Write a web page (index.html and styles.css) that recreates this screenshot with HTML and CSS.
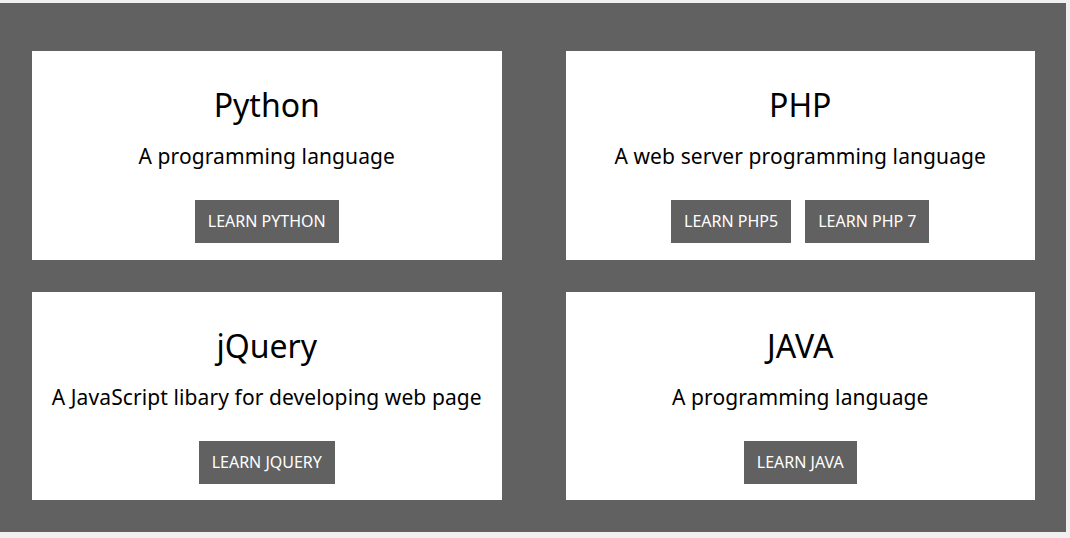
FILE: index.html
```html
<!DOCTYPE html>
<html>
<head>
<meta charset="utf-8">
<link rel="stylesheet" href="styles.css">
</head>
<body>
<div class="page">
  <div class="grid">
    <div class="card">
      <h2 class="title">Python</h2>
      <p class="desc">A programming language</p>
      <div class="actions"><a class="btn">LEARN PYTHON</a></div>
    </div>
    <div class="card">
      <h2 class="title">PHP</h2>
      <p class="desc">A web server programming language</p>
      <div class="actions"><a class="btn">LEARN PHP5</a><a class="btn">LEARN PHP 7</a></div>
    </div>
    <div class="card">
      <h2 class="title">jQuery</h2>
      <p class="desc">A JavaScript libary for developing web page</p>
      <div class="actions"><a class="btn">LEARN JQUERY</a></div>
    </div>
    <div class="card">
      <h2 class="title">JAVA</h2>
      <p class="desc">A programming language</p>
      <div class="actions"><a class="btn">LEARN JAVA</a></div>
    </div>
  </div>
</div>
</body>
</html>
```
FILE: styles.css
```css
html, body {
  margin: 0;
  padding: 0;
}
body {
  background: #f0f0f0;
  padding-top: 3px;
  font-family: "Noto Sans", "Open Sans", sans-serif;
  color: #000;
}
.page {
  width: 1066px;
  height: 529px;
  box-sizing: border-box;
  background: #616161;
  padding: 48px 31px 32px 32px;
}
.grid {
  display: grid;
  grid-template-columns: 1fr 1fr;
  column-gap: 64px;
  row-gap: 32px;
}
.card {
  background: #fff;
  text-align: center;
  padding: 34px 4px 17px;
  height: 209px;
  box-sizing: border-box;
}
.card:nth-child(n+3) {
  height: 208px;
}
.title {
  margin: 0;
  font-size: 32px;
  line-height: 40px;
  font-weight: normal;
}
.desc {
  margin: 17px 0 0;
  font-size: 21px;
  line-height: 28px;
  letter-spacing: 0.1px;
}
.actions {
  margin-top: 30px;
  display: flex;
  justify-content: center;
  gap: 14px;
}
.btn {
  display: block;
  background: #616161;
  color: #fff;
  font-size: 16px;
  line-height: 19px;
  padding: 12px 13px;
}
```
